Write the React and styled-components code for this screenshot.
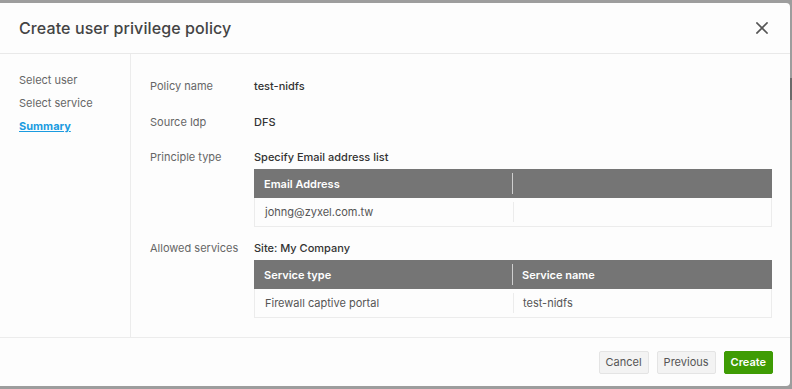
import styled, { createGlobalStyle } from 'styled-components';

const Global = createGlobalStyle`
  html, body { margin: 0; padding: 0; }
  body {
    background: #9d9d9d;
    font-family: Inter, "Noto Sans", sans-serif;
    overflow: hidden;
  }
`;

const Backdrop = styled.div`
  position: relative;
  width: 792px;
  height: 389px;
  padding-top: 3px;
  box-sizing: border-box;
`;

const ScrollThumb = styled.div`
  position: absolute;
  right: 0;
  top: 78px;
  width: 2px;
  height: 22px;
  background: #6a6a6a;
`;

const Modal = styled.div`
  width: 790px;
  height: 383px;
  background: #fdfdfd;
  border-radius: 0 4px 4px 0;
  display: flex;
  flex-direction: column;
`;

const Header = styled.header`
  height: 51px;
  flex: none;
  display: flex;
  align-items: center;
  justify-content: space-between;
  padding: 0 22px 0 19px;
  border-bottom: 1px solid #e9e9e9;
  box-sizing: border-box;
`;

const Title = styled.h1`
  margin: 0;
  font-size: 16px;
  font-weight: 500;
  color: #444;
  letter-spacing: 0.1px;
`;

const Close = styled.button`
  border: 0;
  background: none;
  padding: 0;
  display: flex;
  cursor: pointer;
`;

const Body = styled.div`
  flex: 1;
  display: flex;
  min-height: 0;
`;

const Sidebar = styled.nav`
  width: 131px;
  flex: none;
  border-right: 1px solid #ececec;
  padding: 15px 0 0 19px;
  box-sizing: border-box;
  display: flex;
  flex-direction: column;
  gap: 1px;
`;

const Step = styled.a`
  font-size: 11px;
  line-height: 22px;
  color: ${(p) => (p.$active ? '#1b9be0' : '#666')};
  font-weight: ${(p) => (p.$active ? 700 : 400)};
  text-decoration: ${(p) => (p.$active ? 'underline' : 'none')};
`;

const Content = styled.main`
  flex: 1;
  padding: 21px 18px 0 19px;
  display: flex;
  flex-direction: column;
`;

const Field = styled.div`
  display: grid;
  grid-template-columns: 104px 1fr;
  margin-top: ${(p) => p.$top || 0}px;
`;

const Label = styled.div`
  font-size: 11px;
  line-height: 22px;
  color: #666;
`;

const Value = styled.div`
  font-size: 11px;
  line-height: 22px;
  color: #333;
  font-weight: 500;
`;

const Table = styled.div`
  margin-top: 1px;
  border: 1px solid #ececec;
  border-top: 0;
`;

const Row = styled.div`
  display: grid;
  grid-template-columns: 258px 1fr;
  height: ${(p) => (p.$head ? 29 : 28)}px;
  background: ${(p) => (p.$head ? '#757575' : '#fdfdfd')};
  margin: ${(p) => (p.$head ? '0 -1px' : 0)};
`;

const Cell = styled.div`
  display: flex;
  align-items: center;
  padding-left: 10px;
  font-size: 11px;
  font-weight: ${(p) => (p.$head ? 600 : 400)};
  color: ${(p) => (p.$head ? '#fff' : '#555')};
  & + & {
    position: relative;
  }
  & + &::before {
    content: '';
    position: absolute;
    left: 0;
    top: 4px;
    bottom: 4px;
    width: 1px;
    background: ${(p) => (p.$head ? '#cfcfcf' : '#ececec')};
  }
`;

const Footer = styled.footer`
  height: 49px;
  flex: none;
  border-top: 1px solid #ececec;
  display: flex;
  align-items: center;
  justify-content: flex-end;
  gap: 8px;
  padding: 0 17px 0 0;
  box-sizing: border-box;
`;

const Button = styled.button`
  height: 23px;
  padding: 0 6px;
  font-family: inherit;
  font-size: 11px;
  border-radius: 2px;
  border: 1px solid ${(p) => (p.$primary ? '#3e9b04' : '#e4e4e4')};
  background: ${(p) => (p.$primary ? '#3f9c04' : '#f3f3f3')};
  color: ${(p) => (p.$primary ? '#fff' : '#555')};
  font-weight: ${(p) => (p.$primary ? 600 : 400)};
  cursor: pointer;
`;

const DataTable = ({ head, rows }) => (
  <Table>
    <Row $head>
      {head.map((h, i) => (
        <Cell $head key={i}>{h}</Cell>
      ))}
    </Row>
    {rows.map((r, i) => (
      <Row key={i}>
        {r.map((c, j) => (
          <Cell key={j}>{c}</Cell>
        ))}
      </Row>
    ))}
  </Table>
);

const App = () => (
  <>
    <Global />
    <Backdrop>
      <Modal>
        <Header>
          <Title>Create user privilege policy</Title>
          <Close aria-label="Close">
            <svg width="12" height="12" viewBox="0 0 12 12">
              <path d="M1 1L11 11M11 1L1 11" stroke="#555" strokeWidth="1.7" strokeLinecap="square" />
            </svg>
          </Close>
        </Header>
        <Body>
          <Sidebar>
            <Step>Select user</Step>
            <Step>Select service</Step>
            <Step $active href="#">Summary</Step>
          </Sidebar>
          <Content>
            <Field>
              <Label>Policy name</Label>
              <Value>test-nidfs</Value>
            </Field>
            <Field $top={14}>
              <Label>Source Idp</Label>
              <Value>DFS</Value>
            </Field>
            <Field $top={13}>
              <Label>Principle type</Label>
              <div>
                <Value>Specify Email address list</Value>
                <DataTable head={['Email Address', '']} rows={[['johng@zyxel.com.tw', '']]} />
              </div>
            </Field>
            <Field $top={10}>
              <Label>Allowed services</Label>
              <div>
                <Value>Site: My Company</Value>
                <DataTable
                  head={['Service type', 'Service name']}
                  rows={[['Firewall captive portal', 'test-nidfs']]}
                />
              </div>
            </Field>
          </Content>
        </Body>
        <Footer>
          <Button>Cancel</Button>
          <Button>Previous</Button>
          <Button $primary>Create</Button>
        </Footer>
      </Modal>
      <ScrollThumb />
    </Backdrop>
  </>
);

export default App;
